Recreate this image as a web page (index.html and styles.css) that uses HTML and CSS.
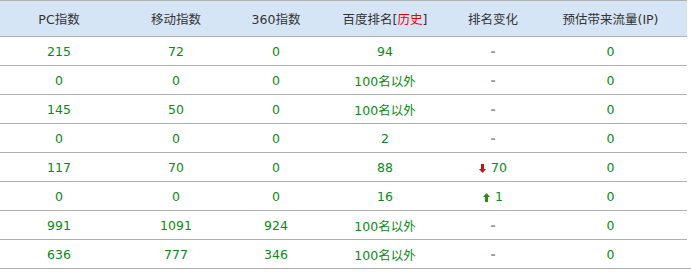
FILE: index.html
```html
<!DOCTYPE html>
<html>
<head>
<meta charset="utf-8">
<link rel="stylesheet" href="styles.css">
</head>
<body>
<div class="wrap">
<table class="rank">
  <colgroup>
    <col class="c1"><col class="c2"><col class="c3"><col class="c4"><col class="c5"><col class="c6">
  </colgroup>
  <thead>
    <tr>
      <th>PC指数</th>
      <th>移动指数</th>
      <th>360指数</th>
      <th>百度排名<span class="br">[</span><span class="hist">历史</span><span class="br">]</span></th>
      <th>排名变化</th>
      <th>预估带来流量(IP)</th>
    </tr>
  </thead>
  <tbody>
    <tr><td>215</td><td>72</td><td>0</td><td>94</td><td><span class="dash">-</span></td><td>0</td></tr>
    <tr><td>0</td><td>0</td><td>0</td><td>100名以外</td><td><span class="dash">-</span></td><td>0</td></tr>
    <tr><td>145</td><td>50</td><td>0</td><td>100名以外</td><td><span class="dash">-</span></td><td>0</td></tr>
    <tr><td>0</td><td>0</td><td>0</td><td>2</td><td><span class="dash">-</span></td><td>0</td></tr>
    <tr><td>117</td><td>70</td><td>0</td><td>88</td><td class="down"><svg class="arr" width="7" height="9" viewBox="0 0 7 9"><path d="M2 0h3v5h2L3.5 9 0 5h2z" fill="#c0161b"/></svg> 70</td><td>0</td></tr>
    <tr><td>0</td><td>0</td><td>0</td><td>16</td><td class="up"><svg class="arr" width="7" height="9" viewBox="0 0 7 9"><path d="M2 9h3V4h2L3.5 0 0 4h2z" fill="#2f8a1a"/></svg> 1</td><td>0</td></tr>
    <tr><td>991</td><td>1091</td><td>924</td><td>100名以外</td><td><span class="dash">-</span></td><td>0</td></tr>
    <tr><td>636</td><td>777</td><td>346</td><td>100名以外</td><td><span class="dash">-</span></td><td>0</td></tr>
  </tbody>
</table>
</div>
</body>
</html>
```
FILE: styles.css
```css
html, body {
  margin: 0;
  padding: 0;
  background: #fff;
}
.wrap {
  width: 691px;
  border-bottom: 1px solid #b0b0b0;
  display: flow-root;
}
.rank {
  width: 687px;
  border-collapse: collapse;
  table-layout: fixed;
  font-family: "DejaVu Sans", "Noto Sans CJK SC", sans-serif;
  font-size: 12.5px;
}
.c1 { width: 118px; }
.c2 { width: 116px; }
.c3 { width: 84px; }
.c4 { width: 134px; }
.c5 { width: 82px; }
.c6 { width: 153px; }
.rank thead tr {
  background: #d6e5f6;
  border-top: 1px solid #b0b0b0;
  border-bottom: 1px solid #b0b0b0;
}
.rank th {
  height: 35px;
  padding: 0;
  font-weight: normal;
  color: #333;
  text-align: center;
  vertical-align: middle;
}
.br { color: #333; }
.hist { color: #e00; }
.rank td {
  height: 28px;
  padding: 0;
  text-align: center;
  vertical-align: middle;
  color: #0a8a14;
}
.rank tbody tr {
  border-bottom: 1px solid #b0b0b0;
}
.rank tbody tr:last-child {
  border-bottom: none;
}
.dash {
  color: #999;
  font-weight: bold;
}
.down { color: #e8141c; }
.up { color: #0a8a14; }
.arr {
  vertical-align: -1px;
  margin-right: 1px;
}
```
